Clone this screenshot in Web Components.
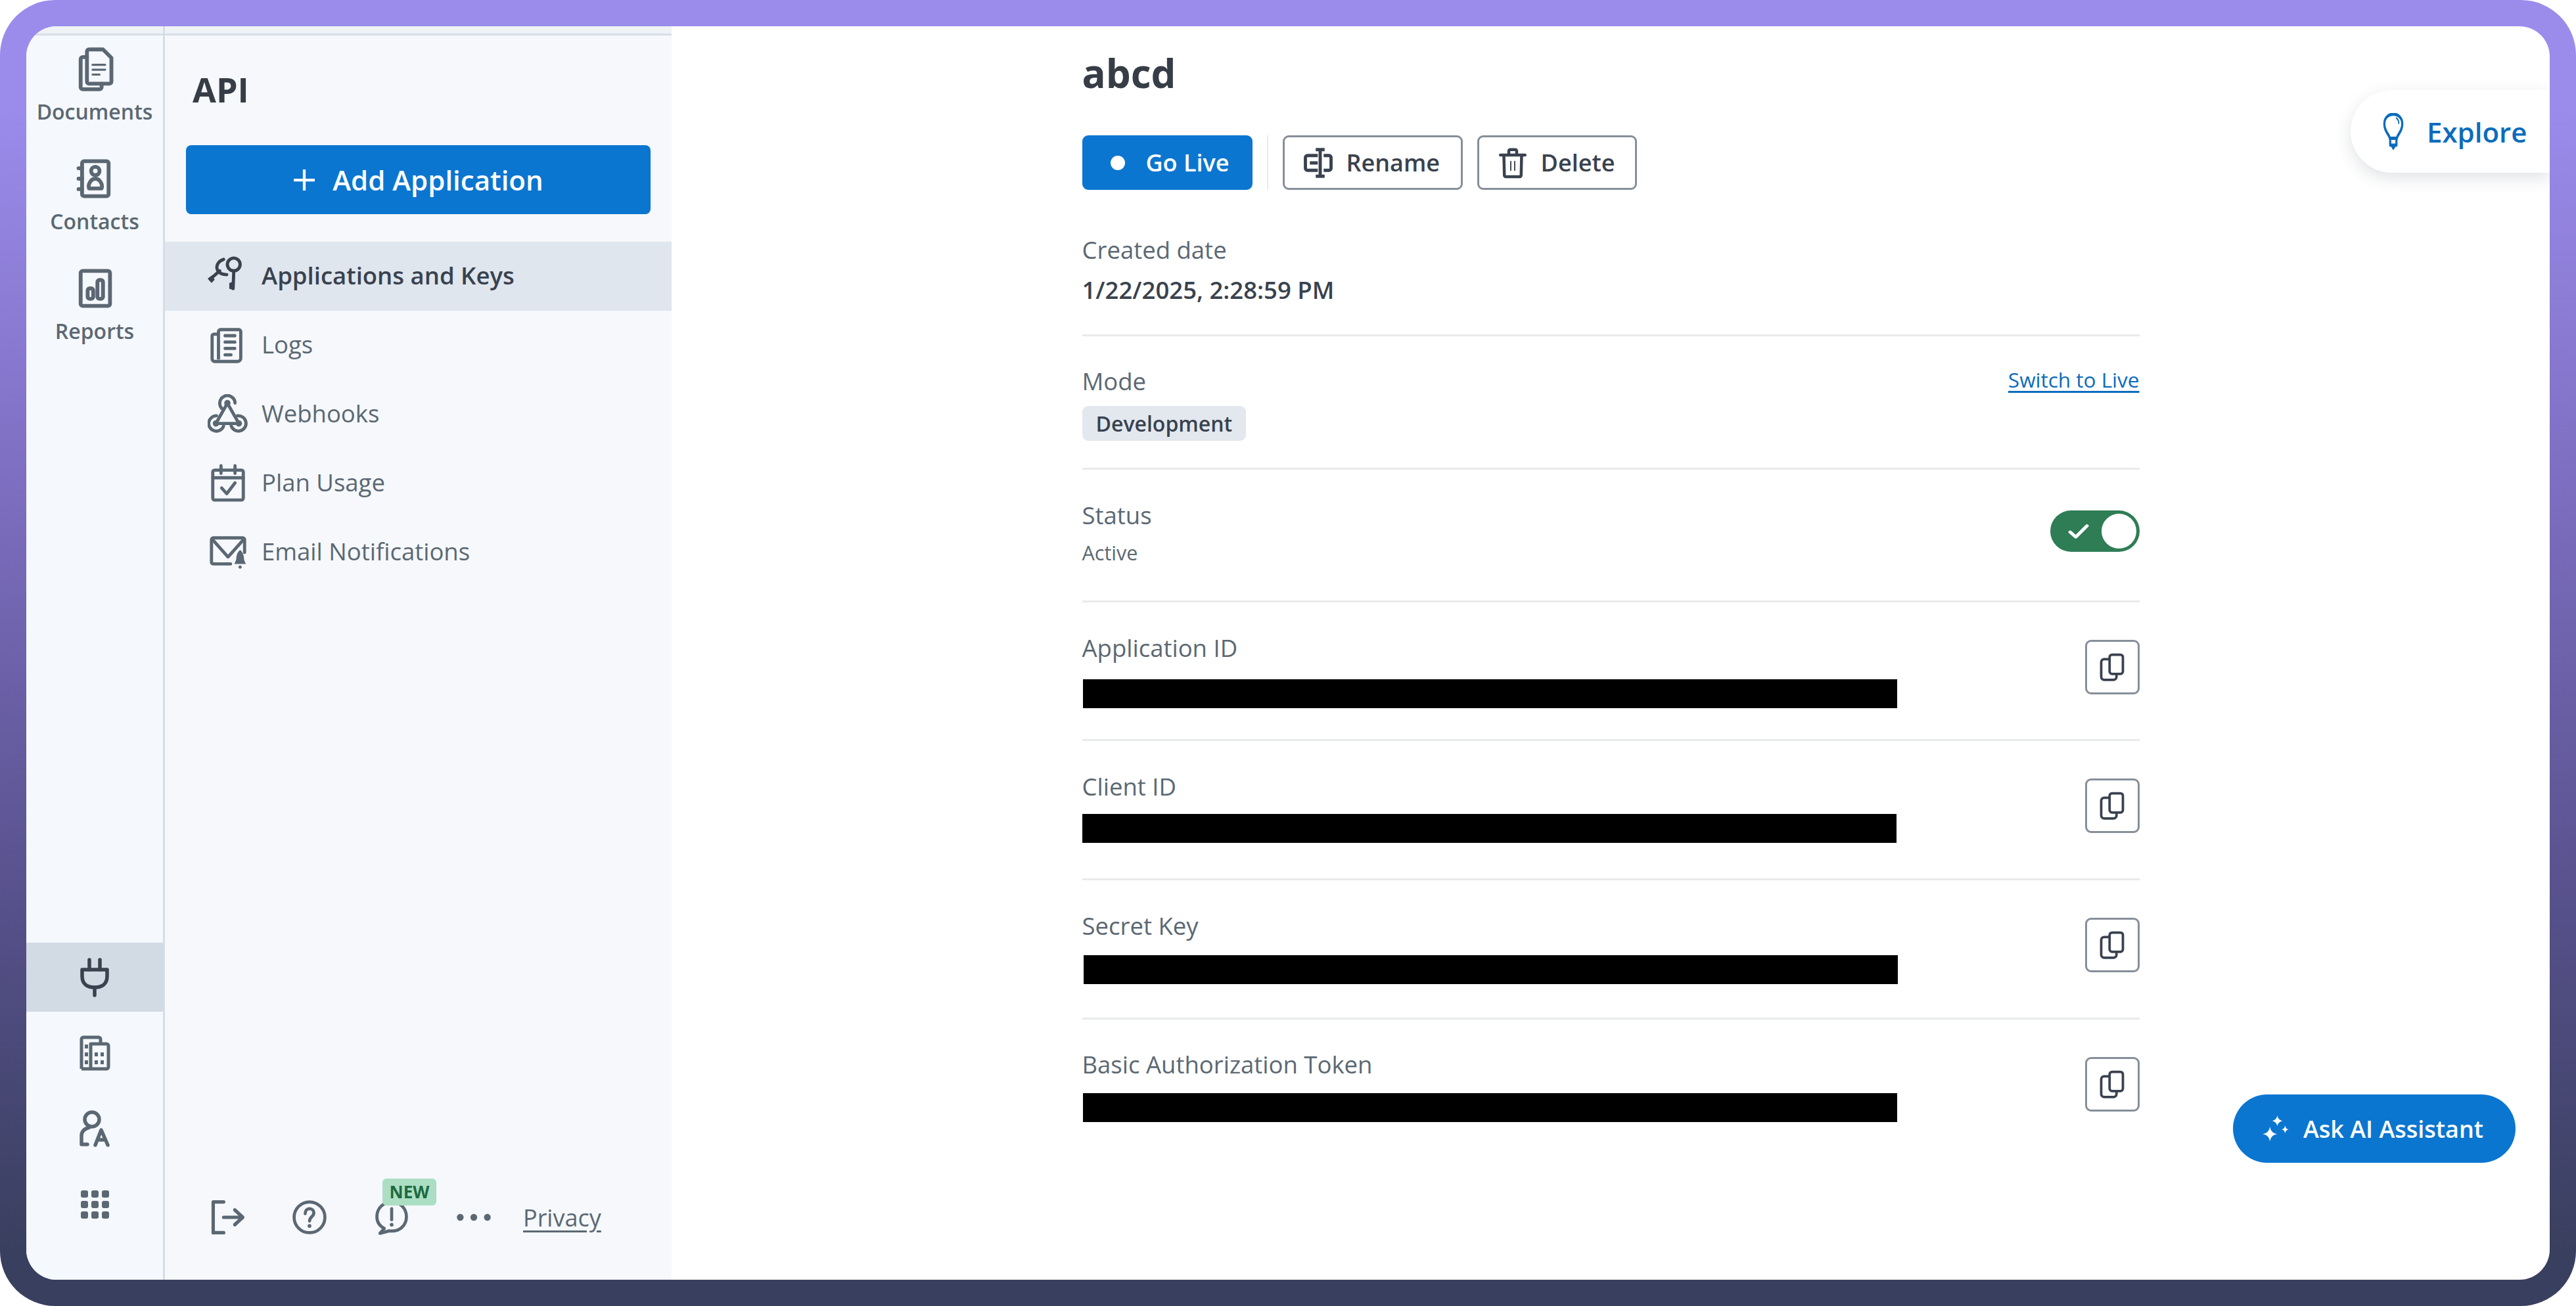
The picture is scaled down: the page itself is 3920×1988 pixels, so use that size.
<!DOCTYPE html>
<html>
<head>
<meta charset="utf-8">
<title>API</title>
<style>
    html, body { margin: 0; padding: 0; background: #fff; }
    body { font-family: "Open Sans", "Noto Sans", sans-serif; width: 3920px; height: 1988px; overflow: hidden; }
</style>
</head>
<body>
<app-frame>
    <icon-rail slot="rail">
        <rail-item icon="documents" label="Documents"></rail-item>
        <rail-item icon="contacts" label="Contacts"></rail-item>
        <rail-item icon="reports" label="Reports"></rail-item>
        <rail-tool slot="bottom" icon="plug" selected></rail-tool>
        <rail-tool slot="bottom" icon="building"></rail-tool>
        <rail-tool slot="bottom" icon="personlang"></rail-tool>
        <rail-tool slot="bottom" icon="apps"></rail-tool>
    </icon-rail>
    <side-panel slot="panel" heading="API" action="Add Application">
        <side-item icon="keys" selected>Applications and Keys</side-item>
        <side-item icon="logs">Logs</side-item>
        <side-item icon="webhooks">Webhooks</side-item>
        <side-item icon="plan">Plan Usage</side-item>
        <side-item icon="mailbell">Email Notifications</side-item>
        <panel-footer slot="footer"></panel-footer>
    </side-panel>
    <app-detail slot="main"></app-detail>
</app-frame>

<script>
// every icon in one place, all drawn on a 64 box
const ICONS = {
    documents: `<g fill="none" stroke="currentColor" stroke-width="5.5" stroke-linejoin="round" stroke-linecap="round"><path d="M24 4h20l12 12v34a3 3 0 0 1-3 3H24a3 3 0 0 1-3-3V7a3 3 0 0 1 3-3z"/><path d="M21 15h-6a3 3 0 0 0-3 3v40a3 3 0 0 0 3 3h24a3 3 0 0 0 3-3v-5"/><path d="M29 26h18M29 33h18M29 40h10" stroke-width="3"/></g>`,
    contacts: `<g fill="none" stroke="currentColor" stroke-width="5.5" stroke-linejoin="round" stroke-linecap="round"><rect x="14" y="7" width="38" height="50" rx="3"/><path d="M9 17h5M9 32h5M9 47h5"/><circle cx="33" cy="21" r="6"/><path d="M24 46c-2-6 3-14 9-14s11 8 9 14z"/></g>`,
    reports: `<g fill="none" stroke="currentColor" stroke-width="5.5" stroke-linejoin="round"><rect x="12" y="7" width="42" height="50" rx="3"/><rect x="22" y="32" width="8" height="15" rx="3"/><rect x="36" y="20" width="8" height="27" rx="3"/></g>`,
    plug: `<g fill="none" stroke="currentColor" stroke-width="5.5" stroke-linecap="round" stroke-linejoin="round"><path d="M24 5v15M40 5v15"/><path d="M13 20h38v10c0 12-8 17-19 17S13 42 13 30z"/><path d="M32 47v12"/></g>`,
    building: `<g fill="none" stroke="currentColor" stroke-width="5" stroke-linejoin="round"><path d="M12 56V11a3 3 0 0 1 3-3h23a3 3 0 0 1 3 3v7M12 56h38a3 3 0 0 0 3-3V21a3 3 0 0 0-3-3H26v38"/></g><g fill="currentColor"><rect x="17" y="19" width="5" height="6"/><rect x="17" y="31" width="5" height="6"/><rect x="17" y="43" width="5" height="6"/><rect x="32" y="31" width="5" height="6"/><rect x="41" y="31" width="5" height="6"/><rect x="32" y="43" width="5" height="6"/><rect x="41" y="43" width="5" height="6"/></g>`,
    personlang: `<g fill="none" stroke="currentColor" stroke-width="5.5" stroke-linecap="round" stroke-linejoin="round"><circle cx="28" cy="18" r="11"/><path d="M24 30c-7 2-12 6-12 13v13h9"/><path d="M33 57l9-23 10 23M37 49h11"/></g>`,
    apps: `<g fill="currentColor"><rect x="11" y="11" width="11" height="11" rx="3"/><rect x="27" y="11" width="11" height="11" rx="3"/><rect x="43" y="11" width="11" height="11" rx="3"/><rect x="11" y="27" width="11" height="11" rx="3"/><rect x="27" y="27" width="11" height="11" rx="3"/><rect x="43" y="27" width="11" height="11" rx="3"/><rect x="11" y="43" width="11" height="11" rx="3"/><rect x="27" y="43" width="11" height="11" rx="3"/><rect x="43" y="43" width="11" height="11" rx="3"/></g>`,
    keys: `<g fill="none" stroke="currentColor" stroke-width="5" stroke-linecap="round" stroke-linejoin="round"><circle cx="41" cy="13" r="10"/><path d="M41 24l-1 27"/><path d="M25 5c-9 3-13 11-9 18 3 4 9 6 14 6"/><path d="M19 23L4 36"/></g><g fill="currentColor"><path d="M34 42l6-2v13l-6-2z"/><path d="M0 35l7-5 4 7-5 5z"/></g>`,
    logs: `<g fill="none" stroke="currentColor" stroke-width="5" stroke-linejoin="round"><path d="M17 14H10a3 3 0 0 0-3 3v36a4 4 0 0 0 4 4h36a5 5 0 0 0 5-5V10a3 3 0 0 0-3-3H20a3 3 0 0 0-3 3v44"/></g><g fill="currentColor"><rect x="25" y="14" width="20" height="5" rx="2"/><rect x="25" y="24" width="20" height="5" rx="2"/><rect x="25" y="34" width="20" height="5" rx="2"/><rect x="25" y="44" width="14" height="5" rx="2"/></g>`,
    webhooks: `<g fill="none" stroke="currentColor" stroke-width="5" stroke-linecap="round"><path d="M43 14A12 12 0 1 0 24 24"/><path d="M14 34A12 12 0 1 0 25 50"/><path d="M47 34A12 12 0 1 1 37 50"/><path d="M30 16L13 46M32 16l17 30M13 46h36"/></g><g fill="currentColor"><circle cx="31" cy="14" r="5"/><circle cx="13" cy="46" r="5"/><circle cx="49" cy="46" r="5"/></g>`,
    plan: `<g fill="none" stroke="currentColor" stroke-width="5" stroke-linejoin="round" stroke-linecap="round"><rect x="8" y="11" width="48" height="47" rx="3"/><path d="M8 23h48M21 4v12M43 4v12"/><path d="M22 39l8 9 13-17"/></g>`,
    mailbell: `<g fill="none" stroke="currentColor" stroke-width="5" stroke-linejoin="round" stroke-linecap="round"><path d="M36 50H9a3 3 0 0 1-3-3V12a3 3 0 0 1 3-3h46a3 3 0 0 1 3 3v20"/><path d="M7 11l25 28 25-28"/></g><path fill="currentColor" d="M51 28c4 3 5 6 6 12 0 5 2 7 3 10H42c1-3 3-5 3-10 1-6 2-9 6-12z"/><circle fill="currentColor" cx="51" cy="55" r="2.5"/>`,
    logout: `<g fill="none" stroke="currentColor" stroke-width="5.5" stroke-linecap="round" stroke-linejoin="round"><path d="M26 7H9v50h17"/><path d="M26 32h30M44 20l13 12-13 12"/></g>`,
    help: `<circle cx="32" cy="32" r="25" fill="none" stroke="currentColor" stroke-width="5"/><path d="M25 26c0-5 3-8 7-8s7 3 7 7c0 6-7 6-7 13" fill="none" stroke="currentColor" stroke-width="5" stroke-linecap="round"/><circle cx="32" cy="46" r="3" fill="currentColor"/>`,
    feedback: `<path d="M20 50l-7 8 15-4c16 2 28-8 28-23 0-14-11-24-24-24S8 17 8 31c0 8 4 15 12 19z" fill="none" stroke="currentColor" stroke-width="5" stroke-linejoin="round"/><path d="M32 18v18" stroke="currentColor" stroke-width="5" stroke-linecap="round"/><circle cx="32" cy="44" r="3" fill="currentColor"/>`,
    more: `<circle cx="10" cy="32" r="5.5" fill="currentColor"/><circle cx="32" cy="32" r="5.5" fill="currentColor"/><circle cx="54" cy="32" r="5.5" fill="currentColor"/>`,
    rename: `<g fill="none" stroke="currentColor" stroke-width="6.5"><path d="M31 17H10a4 4 0 0 0-4 4v22a4 4 0 0 0 4 4h21M43 17h11a4 4 0 0 1 4 4v22a4 4 0 0 1-4 4H43"/><path d="M27 5h18M36 5v54M27 59h18"/><path d="M15 32h16"/></g>`,
    trash: `<g fill="none" stroke="currentColor" stroke-width="6" stroke-linejoin="round" stroke-linecap="round"><path d="M7 16h50M14 16l1 41a3 3 0 0 0 3 3h28a3 3 0 0 0 3-3l1-41"/><path d="M24 16V8a3 3 0 0 1 3-3h10a3 3 0 0 1 3 3v8"/><path d="M28 29v18M36 29v18" stroke-width="2.5"/></g>`,
    copy: `<g fill="none" stroke="currentColor" stroke-width="5" stroke-linejoin="round"><rect x="27" y="6" width="27" height="39" rx="5"/><path d="M27 15H16a6 6 0 0 0-6 6v30a6 6 0 0 0 6 6h19a6 6 0 0 0 6-6v-6"/></g>`,
    check: `<path d="M8 34l16 16 32-36" fill="none" stroke="currentColor" stroke-width="10" stroke-linecap="round" stroke-linejoin="round"/>`,
    bulb: `<g fill="none" stroke="currentColor" stroke-width="5.5" stroke-linejoin="round"><path d="M23 44c-1-6-14-12-14-25C9 9 19 2 32 2s23 7 23 17c0 13-13 19-14 25z"/><path d="M24 44h16v12H24zM28 56l4 5 4-5"/><path d="M40 9c4 2 6 5 6 9" stroke-width="3" stroke-linecap="round"/></g>`,
    sparkle: `<g fill="currentColor"><path d="M36 0C37 7 42 12 49 13 42 14 37 19 36 26 35 19 30 14 23 13 30 12 35 7 36 0z"/><path d="M18 27C20 38 25 43 36 45 25 47 20 52 18 63 16 52 11 47 0 45 11 43 16 38 18 27z"/><path d="M55 24C56 30 58 33 64 34 58 35 56 38 55 44 54 38 52 35 46 34 52 33 54 30 55 24z"/></g>`
};

class UiIcon extends HTMLElement {
    static get observedAttributes() { return ["name"]; }
    constructor() {
        super();
        this.attachShadow({ mode: "open" });
    }
    connectedCallback() { this.render(); }
    attributeChangedCallback() { this.render(); }
    render() {
        this.shadowRoot.innerHTML = `
            <style>
                :host { display: block; width: var(--icon-w, 64px); height: var(--icon-h, 64px); flex: none; }
                svg { display: block; width: 100%; height: 100%; }
            </style>
            <svg viewBox="0 0 64 64" preserveAspectRatio="none">${ICONS[this.getAttribute("name")] || ""}</svg>`;
    }
}
customElements.define("ui-icon", UiIcon);

class AppFrame extends HTMLElement {
    constructor() {
        super();
        this.attachShadow({ mode: "open" }).innerHTML = `
            <style>
                :host {
                    display: block;
                    box-sizing: border-box;
                    width: 3920px;
                    height: 1988px;
                    padding: 40px;
                    border-radius: 84px;
                    background: linear-gradient(180deg, #9b8cec 0%, #9b8cec 8%, #7f6fc2 36%, #56508a 70%, #393f5e 96%);
                }
                #card {
                    display: flex;
                    height: 100%;
                    background: #fff;
                    border-radius: 46px;
                    overflow: hidden;
                }
                #main { flex: 1; min-width: 0; display: block; position: relative; }
            </style>
            <div id="card">
                <slot name="rail"></slot>
                <slot name="panel"></slot>
                <div id="main"><slot name="main"></slot></div>
            </div>`;
    }
}
customElements.define("app-frame", AppFrame);

class IconRail extends HTMLElement {
    constructor() {
        super();
        this.attachShadow({ mode: "open" }).innerHTML = `
            <style>
                :host {
                    display: flex;
                    flex-direction: column;
                    box-sizing: border-box;
                    width: 211px;
                    flex: none;
                    background: linear-gradient(#eff3f6 0 11px, #d7dfe6 11px 14px, #f5f8fc 14px);
                    border-right: 3px solid #d5dde6;
                    padding-top: 14px;
                    padding-bottom: 63px;
                }
                #top { flex: 1; padding-top: 17px; }
                #bottom { display: flex; flex-direction: column; gap: 10px; }
            </style>
            <div id="top"><slot></slot></div>
            <div id="bottom"><slot name="bottom"></slot></div>`;
    }
}
customElements.define("icon-rail", IconRail);

class RailItem extends HTMLElement {
    constructor() {
        super();
        this.attachShadow({ mode: "open" }).innerHTML = `
            <style>
                :host {
                    display: flex;
                    flex-direction: column;
                    align-items: center;
                    height: 167px;
                    color: #5b6873;
                    --icon-w: 68px;
                    --icon-h: 68px;
                }
                span { font-size: 32px; font-weight: 600; line-height: 42px; margin-top: 10px; }
            </style>
            <ui-icon name="${this.getAttribute("icon")}"></ui-icon>
            <span>${this.getAttribute("label")}</span>`;
    }
}
customElements.define("rail-item", RailItem);

class RailTool extends HTMLElement {
    constructor() {
        super();
        this.attachShadow({ mode: "open" }).innerHTML = `
            <style>
                :host {
                    display: flex;
                    align-items: center;
                    justify-content: center;
                    height: 105px;
                    color: #5b6873;
                    --icon-w: 64px;
                    --icon-h: 64px;
                }
                :host([selected]) { background: #d2dae4; color: #39424e; }
            </style>
            <ui-icon name="${this.getAttribute("icon")}"></ui-icon>`;
    }
}
customElements.define("rail-tool", RailTool);

class SidePanel extends HTMLElement {
    constructor() {
        super();
        this.attachShadow({ mode: "open" }).innerHTML = `
            <style>
                :host {
                    display: flex;
                    flex-direction: column;
                    box-sizing: border-box;
                    width: 771px;
                    flex: none;
                    background: linear-gradient(#eff3f6 0 11px, #d7dfe6 11px 14px, #f6f8fc 14px);
                    padding-top: 14px;
                    color: #5b6873;
                }
                h1 {
                    margin: 46px 0 0 42px;
                    font-size: 52px;
                    line-height: 71px;
                    font-weight: 700;
                    color: #363d46;
                }
                button {
                    display: flex;
                    align-items: center;
                    justify-content: center;
                    gap: 26px;
                    box-sizing: border-box;
                    width: 707px;
                    height: 105px;
                    margin: 50px 0 42px 32px;
                    border: 0;
                    border-radius: 8px;
                    background: #0b76d0;
                    color: #fff;
                    font: 600 42px "Open Sans", sans-serif;
                }
                button svg { width: 34px; height: 34px; }
                #list { flex: 1; }
            </style>
            <h1>${this.getAttribute("heading")}</h1>
            <button>
                <svg viewBox="0 0 32 32"><path d="M16 1v30M1 16h30" stroke="#fff" stroke-width="4" fill="none"/></svg>
                ${this.getAttribute("action")}
            </button>
            <div id="list"><slot></slot></div>
            <slot name="footer"></slot>`;
    }
}
customElements.define("side-panel", SidePanel);

class SideItem extends HTMLElement {
    constructor() {
        super();
        this.attachShadow({ mode: "open" }).innerHTML = `
            <style>
                :host {
                    display: flex;
                    align-items: center;
                    gap: 20px;
                    height: 105px;
                    padding-left: 65px;
                    font-size: 36.5px;
                    color: #5b6873;
                    --icon-w: 62px;
                    --icon-h: 62px;
                }
                :host([selected]) { background: #dfe6ee; color: #39424e; font-weight: 600; }
                span { margin-top: -3px; }
            </style>
            <ui-icon name="${this.getAttribute("icon")}"></ui-icon>
            <span><slot></slot></span>`;
    }
}
customElements.define("side-item", SideItem);

class PanelFooter extends HTMLElement {
    constructor() {
        super();
        this.attachShadow({ mode: "open" }).innerHTML = `
            <style>
                :host {
                    display: flex;
                    align-items: center;
                    gap: 65px;
                    height: 56px;
                    margin-bottom: 67px;
                    padding-left: 65px;
                    color: #5b6873;
                    --icon-w: 60px;
                    --icon-h: 60px;
                }
                #feedback { position: relative; }
                #new {
                    position: absolute;
                    left: 16px;
                    top: -29px;
                    width: 82px;
                    height: 41px;
                    border-radius: 6px;
                    background: #acdec4;
                    color: #1d6b40;
                    font-size: 26px;
                    font-weight: 700;
                    line-height: 41px;
                    text-align: center;
                }
                a { color: #5b6873; font-size: 36px; text-decoration: underline; text-underline-offset: 6px; margin-left: -20px; }
            </style>
            <ui-icon name="logout"></ui-icon>
            <ui-icon name="help"></ui-icon>
            <div id="feedback"><ui-icon name="feedback"></ui-icon><div id="new">NEW</div></div>
            <ui-icon name="more"></ui-icon>
            <a>Privacy</a>`;
    }
}
customElements.define("panel-footer", PanelFooter);

class ActionButton extends HTMLElement {
    constructor() {
        super();
        const primary = this.hasAttribute("primary");
        const lead = primary
            ? `<i></i>`
            : `<ui-icon name="${this.getAttribute("icon")}"></ui-icon>`;
        this.attachShadow({ mode: "open" }).innerHTML = `
            <style>
                :host {
                    display: flex;
                    align-items: center;
                    box-sizing: border-box;
                    height: 83px;
                    padding-left: 27px;
                    gap: 19px;
                    border: 3px solid #868f99;
                    border-radius: 9px;
                    background: #fff;
                    color: #39424e;
                    font-size: 36px;
                    font-weight: 600;
                    --icon-w: 48px;
                    --icon-h: 48px;
                }
                :host([primary]) { background: #0b76d0; border-color: #0b76d0; color: #fff; padding-left: 40px; gap: 32px; }
                i { display: block; width: 22px; height: 22px; border-radius: 50%; background: #fff; }
            </style>
            ${lead}<slot></slot>`;
    }
}
customElements.define("action-button", ActionButton);

class CopyButton extends HTMLElement {
    constructor() {
        super();
        this.attachShadow({ mode: "open" }).innerHTML = `
            <style>
                :host {
                    display: flex;
                    align-items: center;
                    justify-content: center;
                    box-sizing: border-box;
                    width: 83px;
                    height: 83px;
                    flex: none;
                    border: 3px solid #868f99;
                    border-radius: 9px;
                    color: #39424e;
                    --icon-w: 48px;
                    --icon-h: 48px;
                }
            </style>
            <ui-icon name="copy"></ui-icon>`;
    }
}
customElements.define("copy-button", CopyButton);

class ToggleSwitch extends HTMLElement {
    constructor() {
        super();
        this.attachShadow({ mode: "open" }).innerHTML = `
            <style>
                :host {
                    display: flex;
                    align-items: center;
                    box-sizing: border-box;
                    width: 136px;
                    height: 63px;
                    padding: 0 5px 0 26px;
                    border-radius: 32px;
                    background: #2e7d55;
                    color: #fff;
                    --icon-w: 34px;
                    --icon-h: 30px;
                }
                i { display: block; margin-left: auto; width: 53px; height: 53px; border-radius: 50%; background: #fff; }
            </style>
            <ui-icon name="check"></ui-icon><i></i>`;
    }
}
customElements.define("toggle-switch", ToggleSwitch);

// one row of the detail list, slot "end" holds whatever sits at the right edge
class DetailRow extends HTMLElement {
    constructor() {
        super();
        this.attachShadow({ mode: "open" }).innerHTML = `
            <style>
                :host {
                    display: flex;
                    justify-content: space-between;
                    box-sizing: border-box;
                    border-bottom: 3px solid #e8eaec;
                    font-size: 36.5px;
                    color: #5b6873;
                    height: var(--row-h, 212px);
                    padding-top: var(--row-top, 44px);
                }
                #label { line-height: 50px; }
                #end { display: block; margin-top: var(--end-top, 13px); }
            </style>
            <div>
                <div id="label">${this.getAttribute("label")}</div>
                <slot></slot>
            </div>
            <div id="end"><slot name="end"></slot></div>`;
    }
}
customElements.define("detail-row", DetailRow);

class RedactedBar extends HTMLElement {
    constructor() {
        super();
        this.attachShadow({ mode: "open" }).innerHTML = `
            <style>
                :host {
                    display: block;
                    width: 1239px;
                    height: 44px;
                    margin-top: var(--bar-top, 23px);
                    margin-left: var(--bar-left, 1px);
                    background: #000;
                }
            </style>`;
    }
}
customElements.define("redacted-bar", RedactedBar);

class AppDetail extends HTMLElement {
    constructor() {
        super();
        this.attachShadow({ mode: "open" }).innerHTML = `
            <style>
                :host { display: block; height: 100%; color: #39424e; }
                #content { width: 1609px; margin: 0 auto; padding-top: 30px; }
                h2 { margin: 0; font-size: 60px; line-height: 82px; font-weight: 700; color: #363d46; }
                #actions { display: flex; align-items: stretch; margin-top: 54px; gap: 22px; }
                #actions hr { width: 2px; margin: 0; border: 0; background: #e8eaec; }
                #value { font-size: 36.5px; font-weight: 600; color: #39424e; line-height: 50px; margin-top: 11px; }
                #badge {
                    display: inline-block;
                    margin-top: 13px;
                    padding: 0 21px;
                    height: 53px;
                    line-height: 53px;
                    border-radius: 9px;
                    background: #e3e8ef;
                    color: #39424e;
                    font-size: 32px;
                    font-weight: 600;
                }
                #sub { font-size: 30.5px; line-height: 42px; margin-top: 11px; color: #5b6873; }
                a { font-size: 31.5px; line-height: 50px; color: #0b6cbd; text-decoration: underline; text-underline-offset: 5px; display: block; margin-top: -2px; }
                #explore {
                    position: absolute;
                    right: 0;
                    top: 97px;
                    display: flex;
                    align-items: center;
                    gap: 32px;
                    box-sizing: border-box;
                    width: 303px;
                    height: 126px;
                    padding-left: 46px;
                    border-radius: 63px 0 0 63px;
                    background: #fff;
                    box-shadow: 0 8px 24px rgba(60, 75, 95, .16);
                    color: #0b6cbd;
                    font-size: 42px;
                    font-weight: 600;
                    --icon-w: 38px;
                    --icon-h: 56px;
                }
                #ask {
                    position: absolute;
                    right: 52px;
                    top: 1626px;
                    display: flex;
                    align-items: center;
                    gap: 22px;
                    box-sizing: border-box;
                    width: 430px;
                    height: 104px;
                    padding-left: 45px;
                    border-radius: 52px;
                    background: #0b76d0;
                    color: #fff;
                    font-size: 36px;
                    font-weight: 600;
                    --icon-w: 40px;
                    --icon-h: 40px;
                }
            </style>
            <div id="content">
                <h2>abcd</h2>
                <div id="actions">
                    <action-button primary style="width:259px">Go Live</action-button>
                    <hr>
                    <action-button icon="rename" style="width:274px">Rename</action-button>
                    <action-button icon="trash" style="width:243px">Delete</action-button>
                </div>
                <detail-row label="Created date" style="--row-h:223px;--row-top:66px">
                    <div id="value">1/22/2025, 2:28:59 PM</div>
                </detail-row>
                <detail-row label="Mode" style="--row-h:203px;--row-top:43px;--end-top:0">
                    <div id="badge">Development</div>
                    <a slot="end">Switch to Live</a>
                </detail-row>
                <detail-row label="Status" style="--row-h:202px;--end-top:18px">
                    <div id="sub">Active</div>
                    <toggle-switch slot="end"></toggle-switch>
                </detail-row>
                <detail-row label="Application ID" style="--row-h:211px">
                    <redacted-bar></redacted-bar>
                    <copy-button slot="end"></copy-button>
                </detail-row>
                <detail-row label="Client ID">
                    <redacted-bar style="--bar-top:17px;--bar-left:0"></redacted-bar>
                    <copy-button slot="end"></copy-button>
                </detail-row>
                <detail-row label="Secret Key">
                    <redacted-bar style="--bar-top:20px;--bar-left:2px"></redacted-bar>
                    <copy-button slot="end"></copy-button>
                </detail-row>
                <detail-row label="Basic Authorization Token" style="--row-top:43px;--end-top:14px;border-bottom:0">
                    <redacted-bar style="--bar-top:19px"></redacted-bar>
                    <copy-button slot="end"></copy-button>
                </detail-row>
            </div>
            <div id="explore"><ui-icon name="bulb"></ui-icon>Explore</div>
            <div id="ask"><ui-icon name="sparkle"></ui-icon>Ask AI Assistant</div>`;
    }
}
customElements.define("app-detail", AppDetail);
</script>
</body>
</html>
